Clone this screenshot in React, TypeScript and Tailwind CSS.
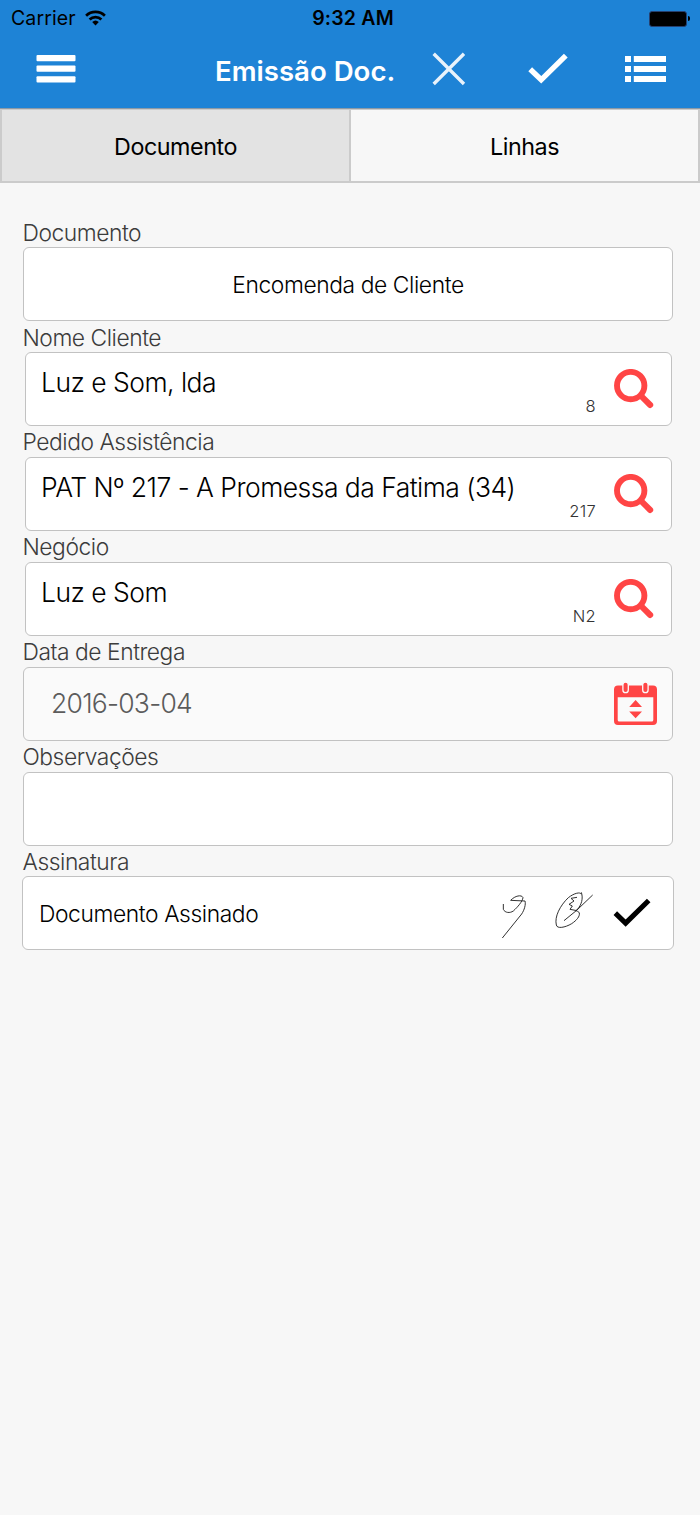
import type { ReactNode } from 'react';

const MenuIcon = () => (
  <svg className="mb-[5px] h-8 w-10" viewBox="0 0 40 32" fill="#fff">
    <rect x="0.5" y="2" width="39" height="6.3" rx="1" />
    <rect x="0.5" y="12.5" width="39" height="6.3" rx="1" />
    <rect x="0.5" y="23.2" width="39" height="6.3" rx="1" />
  </svg>
);

const CloseIcon = () => (
  <svg className="mb-[4px] h-[34px] w-[34px]" viewBox="0 0 34 34" stroke="#e8f2fb" strokeWidth="3.4">
    <path d="M1.7 1.7 32 32M32 1.7 1.7 32" />
  </svg>
);

const CheckIcon = ({ className, color }: { className: string; color: string }) => (
  <svg className={className} viewBox="0 0 40 32" fill="none" stroke={color} strokeWidth="5.4">
    <path d="M2.2 16.2 13.2 26.8 37.8 2.6" />
  </svg>
);

const ListIcon = () => (
  <svg className="mb-[4px] h-[26px] w-[41px]" viewBox="0 0 41 26" fill="#fff">
    <path d="M0 0h6v6H0zM0 10h6v6H0zM0 20h6v6H0zM8.8 0H41v6H8.800zM8.800 10H41v6H8.800zM8.800 20H41v6H8.800z" />
  </svg>
);

const WifiIcon = () => (
  <svg className="mb-px ml-[9px] h-[16px] w-[21px]" viewBox="0 0 21 16" fill="none" stroke="#000" strokeWidth="2.700">
    <path d="M1.1 5.7a13.5 13.5 0 0 1 18.8 0M4.6 9.5a8.4 8.4 0 0 1 11.8 0" />
    <path d="M10.5 15.4 7.2 12.1a4.8 4.8 0 0 1 6.6 0z" fill="#000" stroke="none" />
  </svg>
);

const SearchIcon = () => (
  <svg className="h-[40px] w-[40px]" viewBox="0 0 40 40" fill="none" stroke="#ff4545">
    <circle cx="16.700" cy="16.600" r="13.700" strokeWidth="5.900" />
    <path d="M27.300 27.200 36.200 36" strokeWidth="6" strokeLinecap="round" />
  </svg>
);

const CalendarIcon = () => (
  <svg className="h-[44px] w-[43px]" viewBox="0 0 43 44" fill="#ff4545">
    <path
      fillRule="evenodd"
      d="M4 3.5h35a4 4 0 0 1 4 4V39a4 4 0 0 1-4 4H4a4 4 0 0 1-4-4V7.5a4 4 0 0 1 4-4zM3.7 15.3V38a1.600 1.600 0 0 0 1.600 1.600H37.700a1.600 1.600 0 0 0 1.600-1.600V15.300z"
    />
    <g stroke="#fafafa" strokeWidth="1.3">
      <rect x="8.9" y="0" width="5.400" height="10.600" rx="2.700" />
      <rect x="28.700" y="0" width="5.400" height="10.600" rx="2.700" />
    </g>
    <path d="M21.600 18 28 24.900H15.200zM21.600 36.300 28 29.400H15.200z" />
  </svg>
);

const Signatures = () => (
  <svg className="mt-[3px] mr-px h-[60px] w-[110px]" viewBox="0 0 330 180" fill="none" stroke="#222" strokeWidth="2.8">
    <path d="M25 57V73C30 84 45 85 55 78C68 66 82 50 84 38C80 28 60 32 47 46L90 48C93 58 88 75 80 87L22 159" />
    <path d="M259 28C256 20 238 24 220 38C195 62 178 95 184 120C186 132 210 128 230 116C245 106 255 94 253 84C250 76 238 80 246 74C260 60 265 40 259 22" />
    <path d="M246 37 228 40 237 48 222 58 232 63 225 73 246 77" />
    <path d="M293 30 245 76 207 107" />
  </svg>
);

const Field = ({ label, box, children }: { label: string; box: string; children?: ReactNode }) => (
  <div className="h-[104.85px]">
    <div className="flex h-[31.4px] items-center pt-[3px] pl-[22.5px] text-[22.8px] leading-none tracking-[-0.45px] text-[#3c3c3c]">
      {label}
    </div>
    <div className={`flex h-[74px] rounded-[6px] border border-[#c2c2c2] ${box}`}>{children}</div>
  </div>
);

const LookupField = ({ label, value, code }: { label: string; value: string; code: string }) => (
  <Field label={label} box="ml-[25px] mr-[28px] bg-white">
    <div className="flex-1 whitespace-nowrap pt-[14px] pl-[15px] text-[26.5px] leading-[30px] tracking-[-0.53px]">{value}</div>
    <div className="mr-[18px] self-end pb-[9px] text-[16.5px] leading-[20px] tracking-[0.3px] text-[#333]">{code}</div>
    <div className="mr-[17px] pt-[16px]">
      <SearchIcon />
    </div>
  </Field>
);

export default function App() {
  return (
    <div className="min-h-[1515px] w-[700px] bg-[#f7f7f7] font-['Inter','Liberation_Sans',sans-serif] font-light text-black">
      <header className="h-[109px] border-b border-[#8d9aa6] bg-[#1e83d6]">
        <div className="grid h-9 grid-cols-3 items-center pt-px text-[19.5px] leading-none font-normal">
          <div className="flex items-center pl-[11px]">
            <span className="tracking-[0.1px]">Carrier</span>
            <WifiIcon />
          </div>
          <div className="pl-[6px] text-center font-semibold tracking-[0.2px]">9:32 AM</div>
          <div className="flex items-center justify-end pr-[10px]">
            <div className="h-4 w-[38px] rounded-[3px] border border-[#26406f] bg-black" />
            <div className="ml-px h-[5px] w-[2px] rounded-r-full bg-black" />
          </div>
        </div>
        <div className="flex h-[70px] items-center pl-9">
          <MenuIcon />
          <h1 className="ml-[139px] w-[181px] pt-[2px] text-[27.6px] leading-none font-semibold whitespace-nowrap text-white">
            Emissão Doc.
          </h1>
          <div className="ml-[36px] flex items-center">
            <CloseIcon />
            <CheckIcon className="mr-[57px] mb-[4px] ml-[62px] h-8 w-10" color="#fff" />
            <ListIcon />
          </div>
        </div>
      </header>

      <nav className="flex h-[74px] text-[23.3px] font-normal tracking-[-0.45px]">
        <button className="w-[351px] border-2 border-t border-[#cbcbcb] bg-[#e3e3e3] pt-[3px]">Documento</button>
        <button className="flex-1 border-2 border-t border-l-0 border-[#cbcbcb] bg-[#f7f7f7] pt-[3px]">Linhas</button>
      </nav>

      <main className="pt-[33px]">
        <Field label="Documento" box="ml-[23px] mr-[27px] items-center justify-center bg-white pt-[2px] text-[22.8px] tracking-[-0.4px]">
          Encomenda de Cliente
        </Field>
        <LookupField label="Nome Cliente" value="Luz e Som, lda" code="8" />
        <LookupField label="Pedido Assistência" value="PAT Nº 217 - A Promessa da Fatima (34)" code="217" />
        <LookupField label="Negócio" value="Luz e Som" code="N2" />
        <Field label="Data de Entrega" box="ml-[23px] mr-[27px] items-center justify-between bg-[#fafafa] pr-[15px] pl-[27px]">
          <span className="text-[26.5px] tracking-[-0.75px] text-[#5c5c5c]">2016-03-04</span>
          <CalendarIcon />
        </Field>
        <Field label="Observações" box="ml-[23px] mr-[27px] bg-white" />
        <Field label="Assinatura" box="ml-[22px] mr-[26px] items-center bg-white pl-[16px]">
          <span className="flex-1 pt-[2px] text-[22.8px] tracking-[-0.4px]">Documento Assinado</span>
          <Signatures />
          <CheckIcon className="mr-[22px] ml-[7px] h-[30px] w-[38px]" color="#000" />
        </Field>
      </main>
    </div>
  );
}
